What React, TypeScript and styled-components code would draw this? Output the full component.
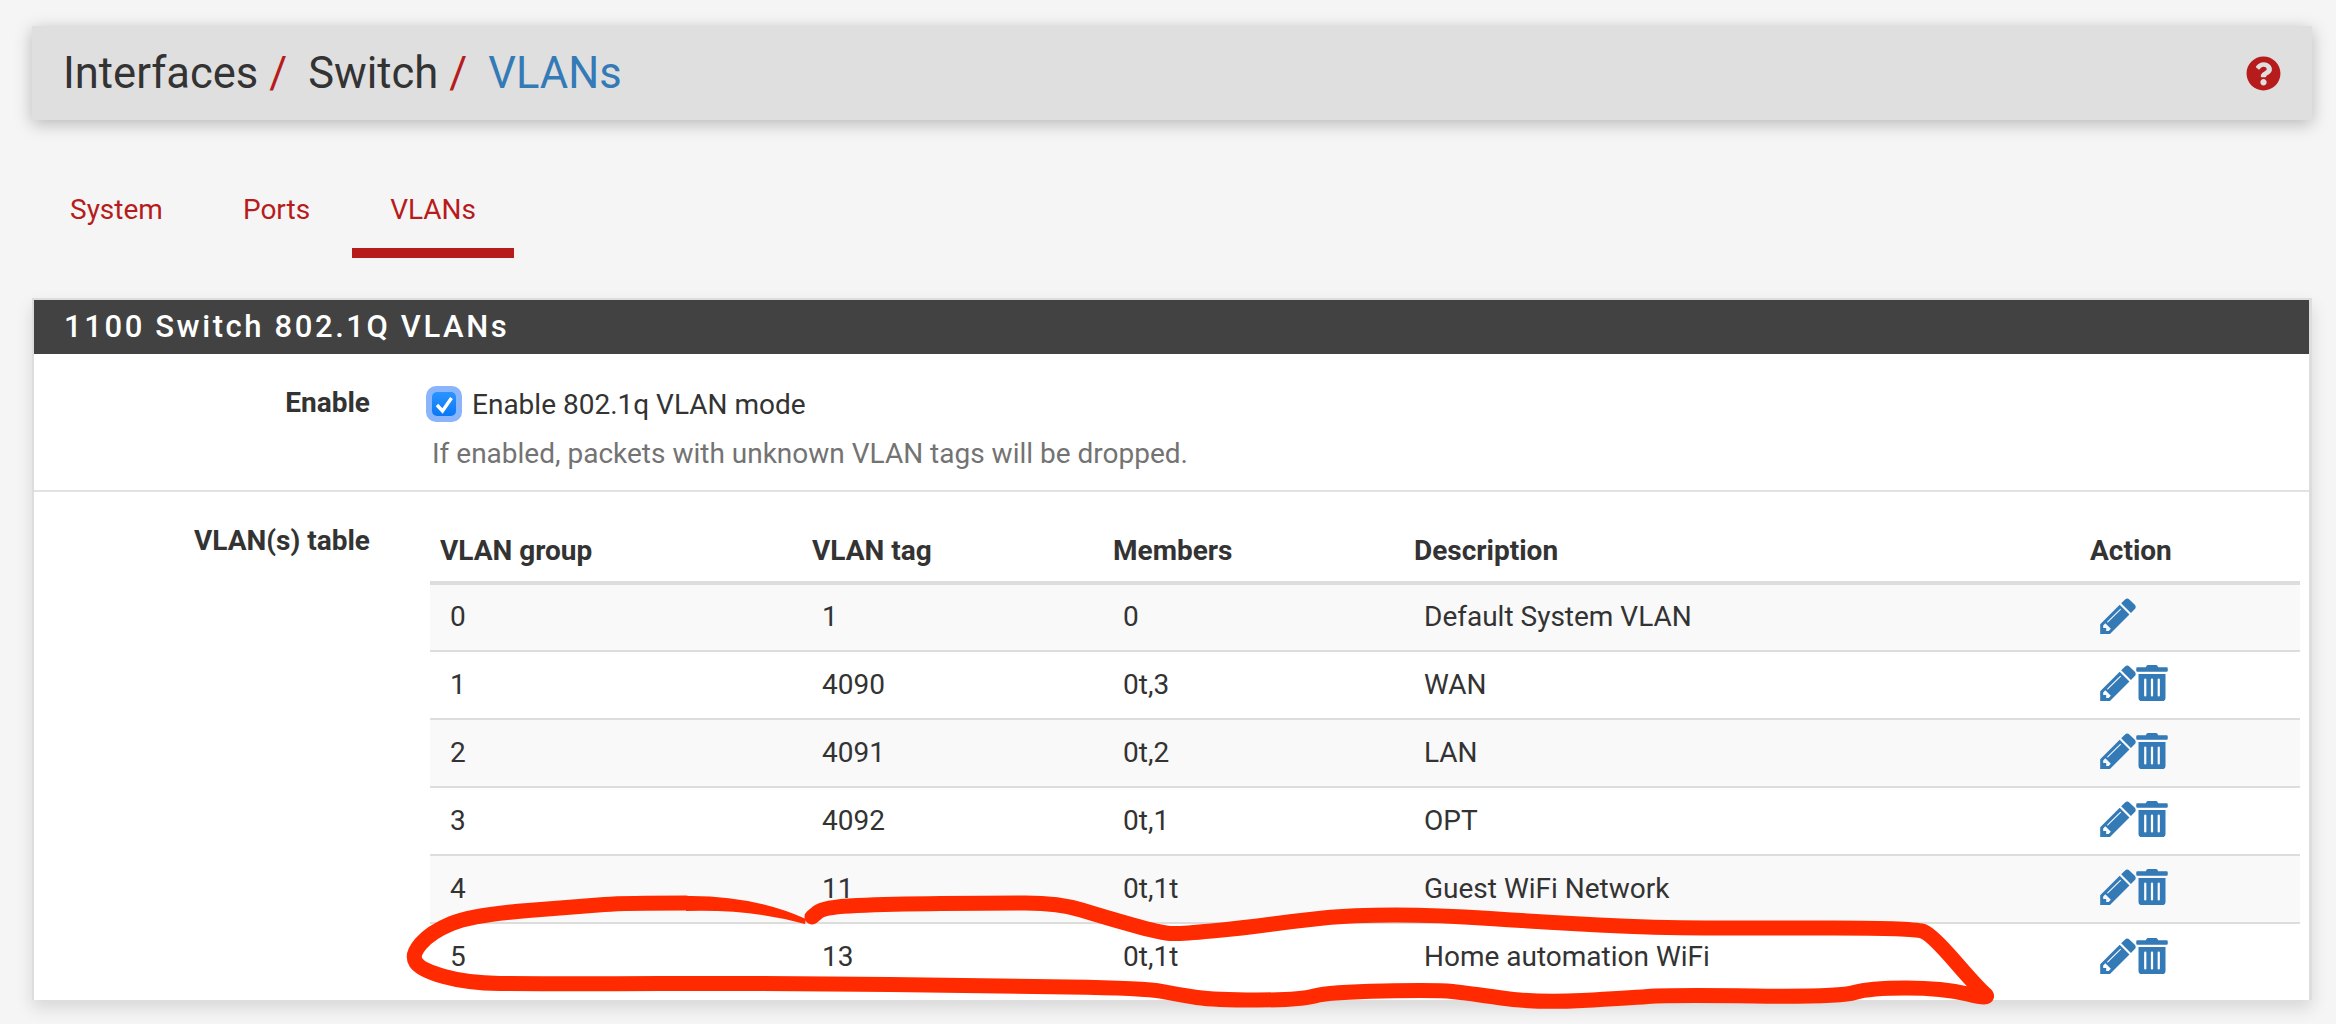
import { ReactElement } from 'react';
import styled, { createGlobalStyle } from 'styled-components';
import { FaQuestionCircle, FaTrashAlt } from 'react-icons/fa';

type Vlan = {
  group: number;
  tag: number;
  members: string;
  description: string;
  system?: boolean;
};

const VLANS: Vlan[] = [
  { group: 0, tag: 1, members: '0', description: 'Default System VLAN', system: true },
  { group: 1, tag: 4090, members: '0t,3', description: 'WAN' },
  { group: 2, tag: 4091, members: '0t,2', description: 'LAN' },
  { group: 3, tag: 4092, members: '0t,1', description: 'OPT' },
  { group: 4, tag: 11, members: '0t,1t', description: 'Guest WiFi Network' },
  { group: 5, tag: 13, members: '0t,1t', description: 'Home automation WiFi' }
];

const LOOP: number[][] = [
  [686, 903], [625, 903], [584, 906], [472, 915], [431, 932], [411, 955], [421, 970],
  [467, 983], [533, 984], [788, 983], [992, 986], [1145, 988], [1180, 995], [1214, 1000], [1300, 1000],
  [1329, 992], [1438, 990], [1467, 993], [1536, 1003], [1628, 998], [1668, 995], [1840, 997], [1869, 988],
  [1943, 988], [1992, 1000], [1978, 988], [1932, 935], [1915, 928], [1754, 928], [1656, 928], [1542, 922],
  [1438, 915], [1352, 915], [1295, 921], [1243, 928], [1180, 934], [1161, 933], [1104, 917], [1059, 903],
  [992, 903], [890, 904], [824, 907], [812, 917]
];

// smooth a hand drawn stroke through the midpoints of its segments
const smooth = (points: number[][]): string => {
  let d = `M${points[0][0]} ${points[0][1]}`;
  for (let i = 1; i < points.length - 1; i += 1) {
    const [x, y] = points[i];
    const [nx, ny] = points[i + 1];
    d += ` Q${x} ${y} ${(x + nx) / 2} ${(y + ny) / 2}`;
  }
  const last = points[points.length - 1];
  return `${d} L${last[0]} ${last[1]}`;
};

const PencilIcon = (): ReactElement => (
  <Pencil viewBox="128 128 1520 1536" aria-hidden="true">
    <path d="M491 1536l91-91-235-235-91 91v107h128v128h107zm523-928q0-22-22-22-10 0-17 7l-542 542q-7 7-7 17 0 22 22 22 10 0 17-7l542-542q7-7 7-17zm-54-192l416 416-832 832h-416v-416zm683 96q0 53-37 90l-166 166-416-416 166-165q36-38 90-38 53 0 91 38l235 234q37 39 37 91z" />
  </Pencil>
);

const App = (): ReactElement => {
  return (
    <Page>
      <GlobalStyle />
      <Breadcrumb>
        <Crumbs>
          <Crumb>Interfaces</Crumb>
          <Slash>/</Slash>
          <Crumb>Switch</Crumb>
          <Slash>/</Slash>
          <Crumb $current>VLANs</Crumb>
        </Crumbs>
        <FaQuestionCircle size={35} color="#b71c1c" />
      </Breadcrumb>

      <Tabs>
        <Tab>System</Tab>
        <Tab>Ports</Tab>
        <Tab $active>VLANs</Tab>
      </Tabs>

      <Panel>
        <PanelHeading>1100 Switch 802.1Q VLANs</PanelHeading>

        <FormRow $height={138} $separated>
          <FormLabel>Enable</FormLabel>
          <FormField>
            <CheckLine>
              <CheckRing>
                <CheckBox>
                  <CheckMark viewBox="0 0 24 24" aria-hidden="true">
                    <path d="M5 13l5.5 6L19.5 6" />
                  </CheckMark>
                </CheckBox>
              </CheckRing>
              Enable 802.1q VLAN mode
            </CheckLine>
            <Hint>If enabled, packets with unknown VLAN tags will be dropped.</Hint>
          </FormField>
        </FormRow>

        <FormRow $height={508}>
          <FormLabel>VLAN(s) table</FormLabel>
          <VlanTable>
            <colgroup>
              <col width={372} />
              <col width={301} />
              <col width={301} />
              <col width={676} />
              <col width={220} />
            </colgroup>
            <thead>
              <tr>
                <th>VLAN group</th>
                <th>VLAN tag</th>
                <th>Members</th>
                <th>Description</th>
                <th>Action</th>
              </tr>
            </thead>
            <tbody>
              {VLANS.map((vlan) => (
                <tr key={vlan.group}>
                  <td>{vlan.group}</td>
                  <td>{vlan.tag}</td>
                  <td>{vlan.members}</td>
                  <td>{vlan.description}</td>
                  <td>
                    <Actions>
                      <PencilIcon />
                      {!vlan.system && <FaTrashAlt size={36} color="#337ab7" />}
                    </Actions>
                  </td>
                </tr>
              ))}
            </tbody>
          </VlanTable>
        </FormRow>
      </Panel>

      <Scribble viewBox="0 0 2336 1024" aria-hidden="true">
        <path d={smooth(LOOP)} />
        <Taper d="M686 896 Q752 895 806 919 L805 924 Q752 909 686 911 Z" />
      </Scribble>
    </Page>
  );
};

const GlobalStyle = createGlobalStyle`
  html, body {
    margin: 0;
    height: 1024px;
    overflow: hidden;
    background: #f5f5f5;
  }
  body {
    font-family: Roboto, "Liberation Sans", sans-serif;
    color: #333;
  }
`;

const Page = styled.div`
  position: relative;
  box-sizing: border-box;
  height: 1024px;
  padding: 26px 24px 0 32px;
`;

const Breadcrumb = styled.header`
  display: flex;
  align-items: center;
  justify-content: space-between;
  box-sizing: border-box;
  height: 94px;
  padding: 0 31px 0 31px;
  background: #dfdfdf;
  box-shadow: 0 4px 16px rgba(0, 0, 0, 0.25);
`;

const Crumbs = styled.div`
  display: flex;
  align-items: baseline;
  font-size: 43.5px;
`;

const Crumb = styled.span<{ $current?: boolean }>`
  color: ${(p) => (p.$current ? '#337ab7' : '#333')};
`;

const Slash = styled.span`
  margin: 0 21px 0 11px;
  color: #b71c1c;
`;

const Tabs = styled.nav`
  display: flex;
  gap: 4px;
  height: 100px;
  margin-top: 38px;
`;

const Tab = styled.a<{ $active?: boolean }>`
  display: flex;
  align-items: center;
  box-sizing: border-box;
  padding: 12px 38px 0;
  border-bottom: 10px solid ${(p) => (p.$active ? '#b71c1c' : 'transparent')};
  color: #b71c1c;
  font-size: 28px;
`;

const Panel = styled.section`
  margin-top: 40px;
  height: 702px;
  box-sizing: border-box;
  border: 2px solid #ddd;
  border-bottom: 0;
  border-right-width: 3px;
  background: #fff;
  box-shadow: 0 8px 16px rgba(0, 0, 0, 0.12);
`;

const PanelHeading = styled.h2`
  box-sizing: border-box;
  height: 54px;
  margin: 0;
  padding-left: 30px;
  background: #424242;
  color: #fff;
  font-size: 31px;
  font-weight: 500;
  line-height: 54px;
  letter-spacing: 2.6px;
`;

const FormRow = styled.div<{ $height: number; $separated?: boolean }>`
  display: grid;
  grid-template-columns: 336px 1fr;
  box-sizing: border-box;
  height: ${(p) => p.$height}px;
  padding-right: 10px;
  border-bottom: ${(p) => (p.$separated ? '2px solid #e2e2e2' : '0')};
`;

const FormLabel = styled.label`
  padding-top: 32px;
  font-size: 28px;
  font-weight: 700;
  line-height: 34px;
  text-align: right;
`;

const FormField = styled.div`
  padding: 32px 0 0 56px;
`;

const CheckLine = styled.div`
  display: flex;
  align-items: center;
  gap: 10px;
  height: 36px;
  font-size: 28px;
`;

const CheckRing = styled.span`
  display: flex;
  align-items: center;
  justify-content: center;
  width: 36px;
  height: 36px;
  border-radius: 10px;
  background: #8ab4fb;
`;

const CheckBox = styled.span`
  display: flex;
  width: 24px;
  height: 24px;
  border-radius: 5px;
  background: linear-gradient(#2a94ff, #0a78f5);
`;

const CheckMark = styled.svg`
  width: 24px;
  height: 24px;
  fill: none;
  stroke: #fff;
  stroke-width: 3.4;
`;

const Hint = styled.p`
  margin: 15px 0 0 6px;
  color: #737373;
  font-size: 28px;
  line-height: 34px;
`;

const VlanTable = styled.table`
  align-self: start;
  width: 1870px;
  margin-left: 60px;
  border-collapse: collapse;
  table-layout: fixed;
  font-size: 28px;

  th {
    box-sizing: border-box;
    height: 91px;
    padding: 28px 10px 0;
    border-bottom: 4px solid #ddd;
    font-weight: 700;
    text-align: left;
  }

  td {
    box-sizing: border-box;
    height: 68px;
    padding: 0 20px 2px;
    border-bottom: 2px solid #ddd;
  }

  tbody tr:nth-child(odd) {
    background: #f9f9f9;
  }

  tbody tr:last-child td {
    border-bottom: 0;
  }
`;

const Actions = styled.div`
  display: flex;
  align-items: center;
  margin-top: -2px;

  svg + svg {
    margin-left: -2px;
  }
`;

const Pencil = styled.svg`
  width: 36px;
  height: 36px;
  fill: #337ab7;
`;

const Scribble = styled.svg`
  position: absolute;
  top: 0;
  left: 0;
  width: 2336px;
  height: 1024px;
  fill: none;
  stroke: #ff2a00;
  stroke-width: 15;
  stroke-linecap: round;
  stroke-linejoin: round;
  pointer-events: none;
`;

const Taper = styled.path`
  fill: #ff2a00;
  stroke: none;
`;

export default App;
